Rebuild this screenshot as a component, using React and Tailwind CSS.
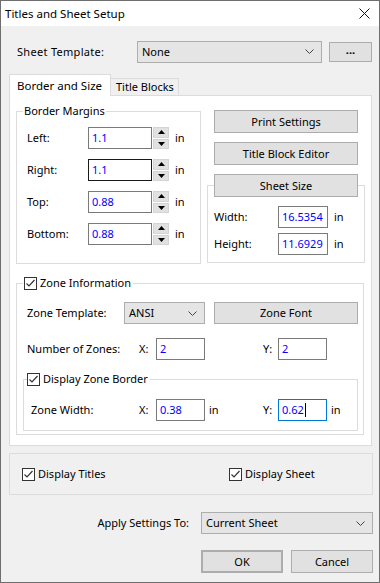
import React from "react";

function Btn({ children, className = "" }) {
    return (
        <div className={`flex items-center justify-center border border-[#adadad] bg-[#e1e1e1] ${className}`}>
            {children}
        </div>
    );
}

function Field({ value, className = "", border = "border-[#7a7a7a]", caret = false }) {
    return (
        <div className={`flex h-[22px] items-center overflow-hidden whitespace-nowrap border bg-white pl-[3px] text-[#0000ff] ${border} ${className}`}>
            {value}
            {caret && <span className="ml-[1px] h-[14px] w-px bg-black" />}
        </div>
    );
}

function Chevron() {
    return (
        <svg width="9" height="5" viewBox="0 0 9 5" className="shrink-0">
            <polyline points="0.5,0.5 4.5,4.5 8.5,0.5" fill="none" stroke="#444" strokeWidth="1" />
        </svg>
    );
}

function Combo({ value, className = "" }) {
    return (
        <div className={`flex h-[22px] items-center justify-between border border-[#adadad] bg-[#e5e5e5] pl-[4px] pr-[7px] ${className}`}>
            <span>{value}</span>
            <Chevron />
        </div>
    );
}

function Check() {
    return (
        <svg width="13" height="13" viewBox="0 0 13 13" className="shrink-0">
            <rect x="0.5" y="0.5" width="12" height="12" fill="#fff" stroke="#333" />
            <polyline points="2.5,6.5 5,9 10.5,3" fill="none" stroke="#333" strokeWidth="1.2" />
        </svg>
    );
}

function Spin() {
    return (
        <div className="ml-[1px] flex h-[22px] w-[16px] flex-col gap-[1px]">
            <div className="flex flex-1 items-center justify-center border border-[#d4d4d4] bg-[#e1e1e1]">
                <svg width="7" height="4" viewBox="0 0 7 4"><polygon points="0,4 3.5,0 7,4" fill="#000" /></svg>
            </div>
            <div className="flex flex-1 items-center justify-center border border-[#d4d4d4] bg-[#e1e1e1]">
                <svg width="7" height="4" viewBox="0 0 7 4"><polygon points="0,0 7,0 3.5,4" fill="#000" /></svg>
            </div>
        </div>
    );
}

function MarginRow({ label, value, dark }) {
    return (
        <div className="flex h-[22px] items-center">
            <span className="w-[71px] pl-[10px]">{label}</span>
            <Field value={value} className="w-[64px]" border={dark ? "border-[#1a1a1a]" : "border-[#7a7a7a]"} />
            <Spin />
            <span className="ml-[6px]">in</span>
        </div>
    );
}

export default function App() {
    return (
        <div className="flex h-[583px] w-[380px] flex-col border border-[#6e6e6e] bg-[#f0f0f0] font-['Noto_Sans',sans-serif] text-[11px] leading-[16px] text-black">
            {/* Title bar */}
            <div className="flex h-[25px] shrink-0 items-center justify-between bg-white pl-[4px] pr-[9px]">
                <span className="text-[11.5px]">Titles and Sheet Setup</span>
                <svg width="11" height="11" viewBox="0 0 11 11">
                    <path d="M0.5 0.5 L10.5 10.5 M10.5 0.5 L0.5 10.5" stroke="#111" strokeWidth="1" />
                </svg>
            </div>

            {/* Sheet template */}
            <div className="mt-[15px] flex h-[21px] items-center">
                <span className="w-[136px] pl-[16px] tracking-[0.3px]">Sheet Template:</span>
                <Combo value="None" className="h-[21px] w-[185px]" />
                <Btn className="ml-[7px] h-[20px] w-[43px] pb-[3px] font-bold">...</Btn>
            </div>

            {/* Tabs */}
            <div className="mt-[12px] flex items-end pl-[8px]">
                <div className="relative z-10 -mb-px flex h-[22px] w-[102px] items-center border border-b-0 border-[#dcdcdc] bg-white pl-[7px] text-[11.5px]">
                    Border and Size
                </div>
                <div className="flex h-[17px] w-[68px] items-center border border-b-0 border-l-0 border-[#dcdcdc] pl-[5px]">
                    Title Blocks
                </div>
            </div>

            {/* Panel */}
            <div className="ml-[8px] flex h-[351px] w-[363px] flex-col border border-[#dcdcdc] bg-white">
                <div className="flex">
                    <fieldset className="ml-[6px] mt-[7px] h-[161px] w-[185px] border border-[#dcdcdc]">
                        <legend className="ml-[6px] px-[1px]">Border Margins</legend>
                        <div className="mt-[8px] flex flex-col gap-[10px]">
                            <MarginRow label="Left:" value="1.1" />
                            <MarginRow label="Right:" value="1.1" dark />
                            <MarginRow label="Top:" value="0.88" />
                            <MarginRow label="Bottom:" value="0.88" />
                        </div>
                    </fieldset>

                    <div className="ml-[6px] mt-[14px] flex w-[158px] flex-col">
                        <Btn className="ml-[7px] h-[23px] w-[144px]">Print Settings</Btn>
                        <Btn className="ml-[7px] mt-[9px] h-[23px] w-[144px]">Title Block Editor</Btn>
                        <fieldset className="mt-[9px] h-[89px] border border-[#dcdcdc]">
                            <legend className="ml-[6px]">
                                <Btn className="h-[23px] w-[144px]">Sheet Size</Btn>
                            </legend>
                            <div className="mt-[9px] flex flex-col gap-[5px]">
                                <div className="flex h-[22px] items-center">
                                    <span className="w-[70px] pl-[6px]">Width:</span>
                                    <Field value="16.5354" className="w-[50px]" />
                                    <span className="ml-[6px]">in</span>
                                </div>
                                <div className="flex h-[22px] items-center">
                                    <span className="w-[70px] pl-[6px]">Height:</span>
                                    <Field value="11.6929" className="w-[50px]" />
                                    <span className="ml-[6px]">in</span>
                                </div>
                            </div>
                        </fieldset>
                    </div>
                </div>

                {/* Zone information */}
                <fieldset className="ml-[6px] mt-[11px] w-[348px] border border-[#dcdcdc] pb-[3px]">
                    <legend className="ml-[6px] flex items-center gap-[3px] pl-[1px] pr-[2px]">
                        <Check />
                        <span>Zone Information</span>
                    </legend>
                    <div className="mt-[11px] flex h-[22px] items-center">
                        <span className="w-[107px] pl-[10px]">Zone Template:</span>
                        <Combo value="ANSI" className="w-[81px]" />
                        <Btn className="ml-[9px] h-[22px] w-[144px]">Zone Font</Btn>
                    </div>
                    <div className="mt-[14px] flex h-[22px] items-center">
                        <span className="w-[122px] pl-[10px]">Number of Zones:</span>
                        <span className="w-[17px]">X:</span>
                        <Field value="2" className="w-[49px]" />
                        <span className="ml-[58px] w-[15px]">Y:</span>
                        <Field value="2" className="w-[49px]" />
                    </div>

                    <fieldset className="ml-[6px] mt-[11px] w-[335px] border border-[#dcdcdc] pb-[9px]">
                        <legend className="ml-[3px] flex items-center gap-[3px] pr-[2px]">
                            <Check />
                            <span>Display Zone Border</span>
                        </legend>
                        <div className="mt-[12px] flex h-[22px] items-center">
                            <span className="w-[115px] pl-[7px]">Zone Width:</span>
                            <span className="w-[17px]">X:</span>
                            <Field value="0.38" className="w-[49px]" />
                            <span className="w-[58px] pl-[4px]">in</span>
                            <span className="w-[15px]">Y:</span>
                            <Field value="0.62" className="w-[49px]" border="border-[#0078d7]" caret />
                            <span className="ml-[4px]">in</span>
                        </div>
                    </fieldset>
                </fieldset>
            </div>

            {/* Display options */}
            <div className="ml-[8px] mt-[7px] flex h-[42px] w-[364px] items-center border border-[#dcdcdc] pl-[12px]">
                <div className="flex w-[207px] items-center gap-[3px]">
                    <Check />
                    <span>Display Titles</span>
                </div>
                <div className="flex items-center gap-[3px]">
                    <Check />
                    <span>Display Sheet</span>
                </div>
            </div>

            {/* Apply to */}
            <div className="mt-[17px] flex h-[22px] items-center justify-end pr-[6px]">
                <span className="mr-[12px]">Apply Settings To:</span>
                <Combo value="Current Sheet" className="w-[172px]" />
            </div>

            {/* Buttons */}
            <div className="mt-[16px] flex justify-end gap-[8px] pr-[6px]">
                <Btn className="h-[23px] w-[82px] border-2 border-[#0078d7]">OK</Btn>
                <Btn className="h-[23px] w-[82px]">Cancel</Btn>
            </div>
        </div>
    );
}
